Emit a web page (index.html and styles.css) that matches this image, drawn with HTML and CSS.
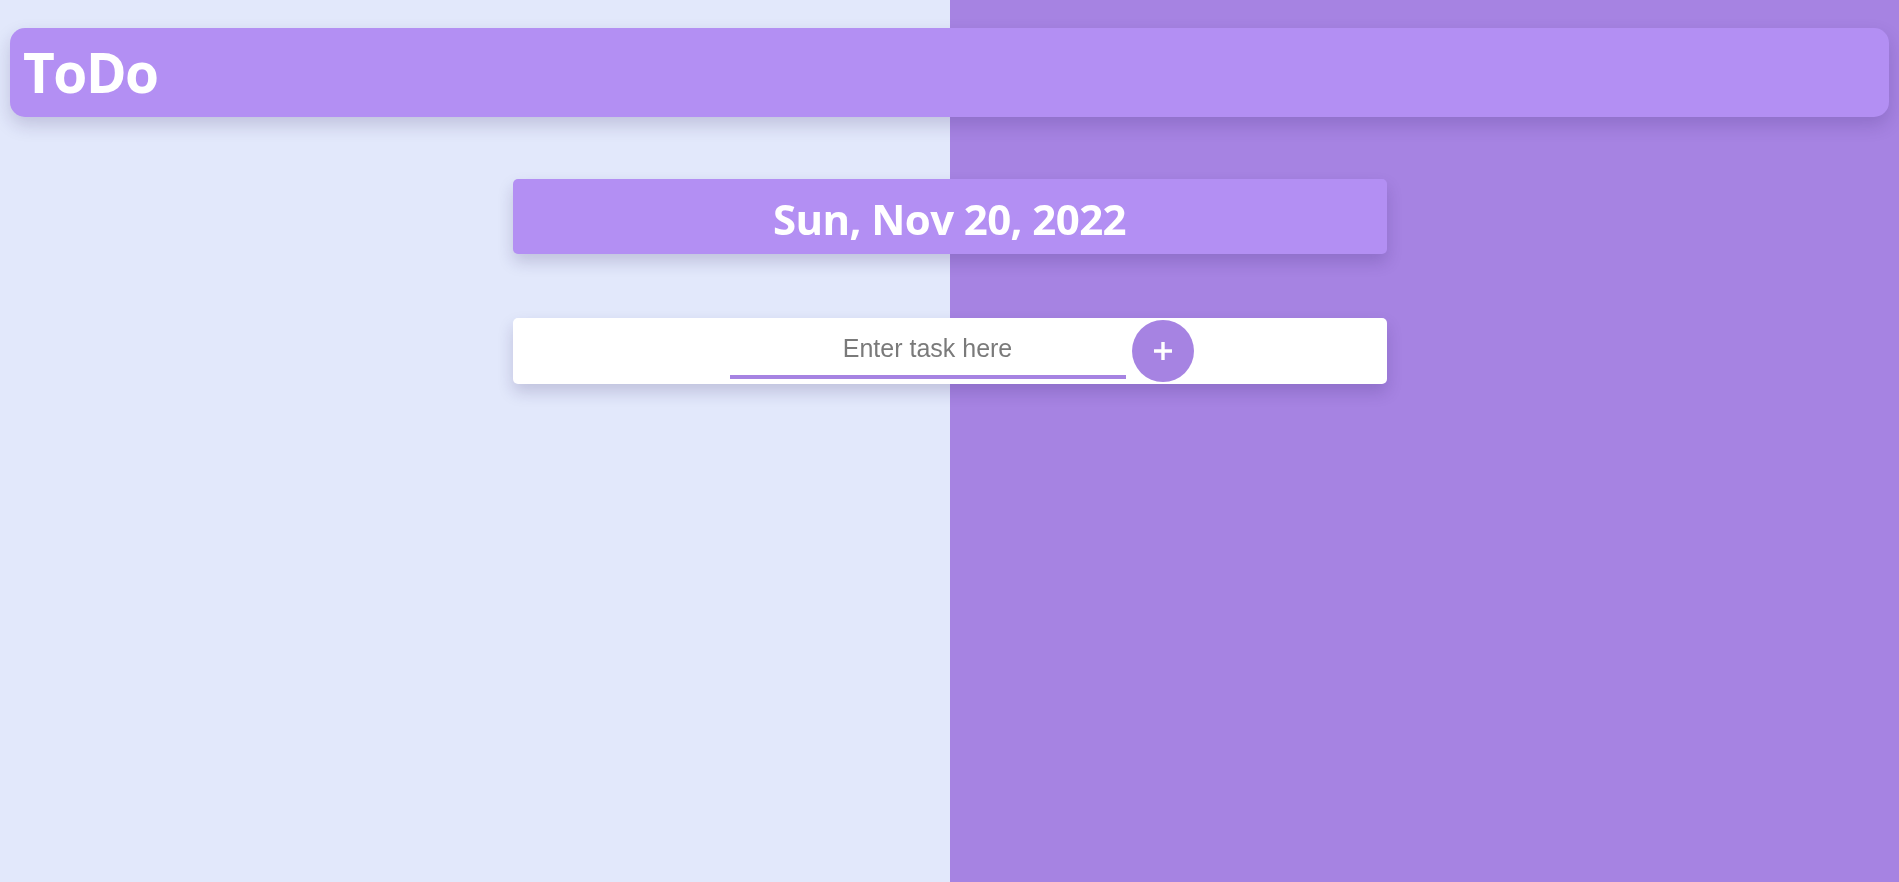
FILE: index.html
```html
<!DOCTYPE html>
<html>
<head>
<meta charset="utf-8">
<link rel="stylesheet" href="styles.css">
<title>ToDo</title>
</head>
<body>
<div class="bg"><div class="bg-left"></div><div class="bg-right"></div></div>
<div class="page">
  <header class="topbar"><h1 class="logo">ToDo</h1></header>
  <main class="main">
    <div class="date-card">Sun, Nov 20, 2022</div>
    <form class="task-card">
      <input class="task-input" type="text" placeholder="Enter task here">
      <button class="add-btn" type="button" aria-label="Add">
        <svg width="20" height="20" viewBox="0 0 20 20"><path d="M10 1V19M1 10H19" stroke="#fff" stroke-width="3.4" fill="none"/></svg>
      </button>
    </form>
  </main>
</div>
</body>
</html>
```
FILE: styles.css
```css
html, body { margin: 0; padding: 0; height: 100%; }
body { font-family: "Open Sans", "Noto Sans", sans-serif; overflow: hidden; }
.bg { position: fixed; inset: 0; display: flex; z-index: 0; }
.bg-left { flex: 1; background: #e2e8fb; }
.bg-right { flex: 1; background: #a683e2; }
.page { position: relative; z-index: 1; padding: 28px 10px 0; }
.topbar {
  height: 89px; background: #b38ff3; border-radius: 15px;
  box-shadow: 0 8px 18px rgba(40, 20, 90, 0.18);
  display: flex; align-items: center; padding-left: 13px;
}
.logo { margin: 0; color: #fff; font-size: 55px; font-weight: 700; line-height: 1; letter-spacing: -1.5px; padding-bottom: 2px; }
.main { display: flex; flex-direction: column; align-items: center; padding-top: 62px; }
.date-card {
  width: 874px; height: 75px; background: #b38ff3; border-radius: 5px;
  box-shadow: 0 8px 16px rgba(40, 20, 90, 0.18);
  display: flex; align-items: center; justify-content: center;
  color: #fff; font-size: 42px; font-weight: 700; padding-top: 3px; box-sizing: border-box; letter-spacing: -0.6px;
}
.task-card {
  margin: 64px 0 0; width: 874px; height: 66px; background: #fff; border-radius: 5px;
  box-shadow: 0 8px 16px rgba(40, 20, 90, 0.18);
  display: flex; align-items: center; box-sizing: border-box; padding-left: 217px;
}
.task-input {
  width: 396px; height: 55px; box-sizing: border-box; border: none; border-bottom: 4px solid #a683e2;
  outline: none; text-align: center; font-family: "Liberation Sans", Arial, sans-serif; font-size: 25px;
  padding: 0 0 2px; margin-top: 0; background: transparent; color: #333;
}
.task-input::placeholder { color: #7a7a7a; }
.add-btn {
  margin-left: 6px; width: 62px; height: 62px; border-radius: 50%; border: none; background: #a683e2;
  display: flex; align-items: center; justify-content: center; padding: 0; cursor: pointer;
}
.add-btn svg { display: block; }
```
